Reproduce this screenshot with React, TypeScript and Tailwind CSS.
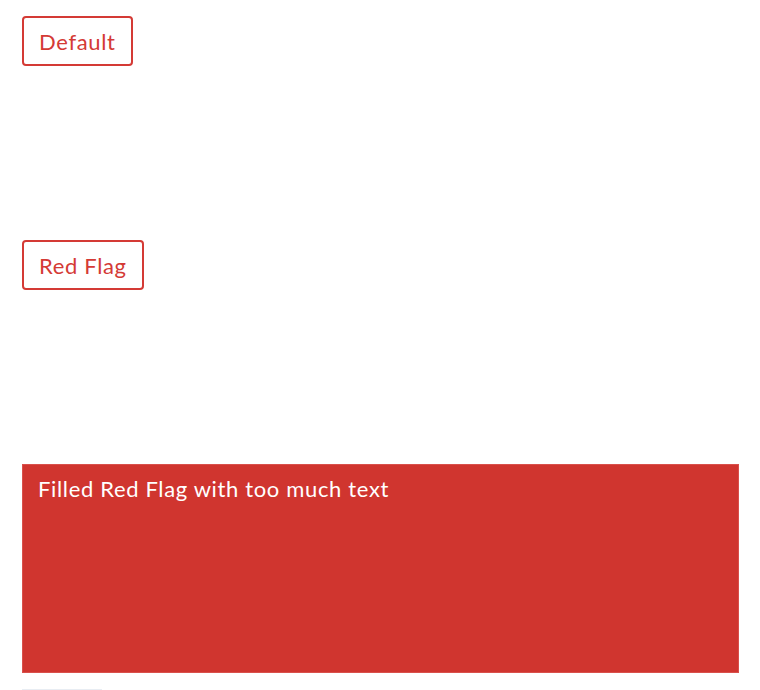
import React from 'react';

const FONT = { fontFamily: 'Lato, "Noto Sans", sans-serif' };

const Flag = ({ label, filled }: { label: string; filled?: boolean }) =>
  filled ? (
    <div className="w-[717px] h-[209px] bg-[#d0352f] border border-[#d9504b] px-[15px] pt-[7px] text-[22px] tracking-[0.65px] leading-[33px] text-white">
      {label}
    </div>
  ) : (
    <div className="inline-flex items-center h-[50px] px-[15px] border-2 border-[#d43a35] rounded-[4px] text-[22px] tracking-[0.65px] text-[#d43a35]">
      {label}
    </div>
  );

export default function App() {
  return (
    <div className="bg-white min-h-[690px] px-[22px] pt-4 flex flex-col gap-4" style={FONT}>
      <div className="h-[208px]">
        <Flag label="Default" />
      </div>
      <div className="h-[208px]">
        <Flag label="Red Flag" />
      </div>
      <Flag label="Filled Red Flag with too much text" filled />
      <div className="w-[80px] h-[2px] bg-[#e8edf3]" />
    </div>
  );
}
